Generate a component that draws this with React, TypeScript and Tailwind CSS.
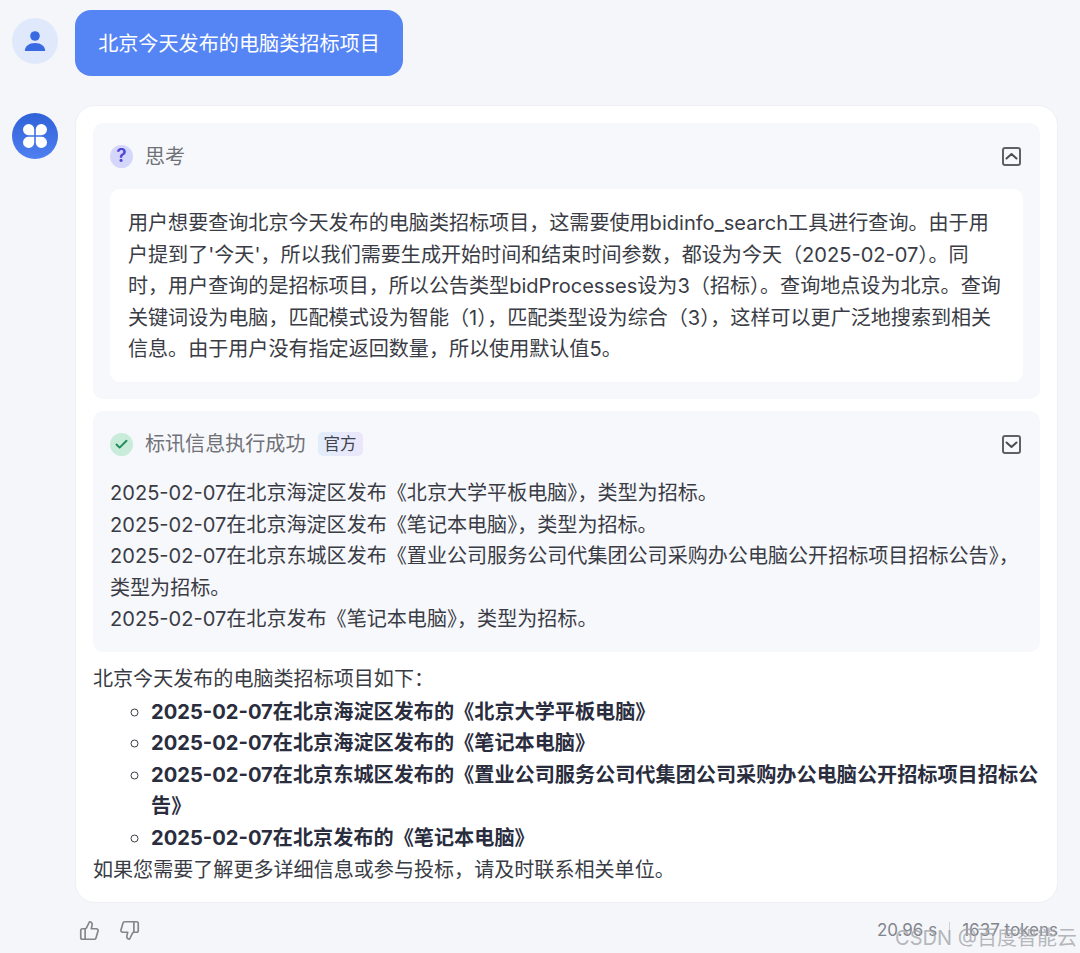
import { ThumbsUp, ThumbsDown, Check } from 'lucide-react';

const font = '[font-family:Inter,"Noto_Sans_CJK_SC",sans-serif]';

const results = [
  '2025-02-07在北京海淀区发布《北京大学平板电脑》，类型为招标。',
  '2025-02-07在北京海淀区发布《笔记本电脑》，类型为招标。',
  '2025-02-07在北京东城区发布《置业公司服务公司代集团公司采购办公电脑公开招标项目招标公告》，类型为招标。',
  '2025-02-07在北京发布《笔记本电脑》，类型为招标。',
];

const items = [
  '2025-02-07在北京海淀区发布的《北京大学平板电脑》',
  '2025-02-07在北京海淀区发布的《笔记本电脑》',
  '2025-02-07在北京东城区发布的《置业公司服务公司代集团公司采购办公电脑公开招标项目招标公告》',
  '2025-02-07在北京发布的《笔记本电脑》',
];

function ToggleBox({ open }: { open: boolean }) {
  return (
    <div className="flex h-[19px] w-[19px] items-center justify-center rounded-[3px] border-2 border-[#5f6168]">
      <svg width="15" height="15" viewBox="0 0 15 15" fill="none" stroke="#4a4c52" strokeWidth="2" strokeLinecap="round" strokeLinejoin="round">
        <path d={open ? 'M2.500 9.500 7.500 5l5 4.500' : 'M2.500 5.500 7.500 10l5-4.500'} />
      </svg>
    </div>
  );
}

function UserAvatar() {
  return (
    <div className="flex h-[46px] w-[46px] shrink-0 items-center justify-center rounded-full bg-[#e0e8fb]">
      <svg width="22" height="22" viewBox="0 0 22 22" fill="#3a6ae2">
        <circle cx="11" cy="6" r="4.800" />
        <path d="M.8 21c0-5 4.400-8 10.200-8s10.200 3 10.200 8z" />
      </svg>
    </div>
  );
}

function BotAvatar() {
  return (
    <div className="flex h-[46px] w-[46px] shrink-0 items-center justify-center rounded-full bg-gradient-to-b from-[#2f62d8] to-[#4f7ff0]">
      <svg width="24" height="24" viewBox="0 0 24 24" fill="#fff">
        <path d="M11.200 11.200H6A5.600 5.600 0 1 1 11.200 6z" />
        <path d="M12.800 11.200H18A5.600 5.600 0 1 0 12.800 6z" />
        <path d="M11.200 12.800H6A5.600 5.600 0 1 0 11.200 18z" />
        <path d="M12.800 12.800H18A5.600 5.600 0 1 1 12.800 18z" />
      </svg>
    </div>
  );
}

export default function App() {
  return (
    <div className={`relative h-[953px] w-[1080px] overflow-hidden bg-[#f4f6fa] ${font} text-[20.07px] leading-[31.5px] text-[#3a3c45]`}>
      <div className="flex gap-[17px] pl-3 pt-[10px]">
        <div className="pt-2">
          <UserAvatar />
        </div>
        <div className="flex h-[66px] w-[328px] items-center justify-center rounded-[16px] bg-[#5585f5] pt-[2px] text-[20.14px] text-white">
          北京今天发布的电脑类招标项目
        </div>
      </div>

      <div className="mt-[29px] flex gap-[17px] pl-3">
        <div className="pt-2">
          <BotAvatar />
        </div>
        <div className="h-[798px] w-[983px] rounded-[20px] border border-[#eef0f5] bg-white px-[17px] pt-[17px]">
          <div className="h-[276px] rounded-[10px] bg-[#f7f8fc] px-[17px]">
            <div className="flex h-[66px] items-center justify-between pr-[2px]">
              <div className="flex items-center gap-[12px]">
                <div className="flex h-[23px] w-[23px] items-center justify-center rounded-full bg-[#d5d6fb] text-[19px] font-semibold text-[#4c45d6]">
                  ?
                </div>
                <span className="pt-[3px] text-[#707278]">思考</span>
              </div>
              <ToggleBox open />
            </div>
            <div className="h-[193px] rounded-[10px] bg-white px-[18px] pt-[19px]">
              用户想要查询北京今天发布的电脑类招标项目，这需要使用bidinfo_search工具进行查询。由于用户提到了'今天'，所以我们需要生成开始时间和结束时间参数，都设为今天（2025-02-07）。同时，用户查询的是招标项目，所以公告类型bidProcesses设为3（招标）。查询地点设为北京。查询关键词设为电脑，匹配模式设为智能（1），匹配类型设为综合（3），这样可以更广泛地搜索到相关信息。由于用户没有指定返回数量，所以使用默认值5。
            </div>
          </div>

          <div className="mt-3 h-[241px] rounded-[10px] bg-[#f7f8fc] px-[17px]">
            <div className="flex h-[66px] items-center justify-between pr-[2px]">
              <div className="flex items-center gap-[12px]">
                <div className="flex h-[23px] w-[23px] items-center justify-center rounded-full bg-[#c8ecd9]">
                  <Check className="h-[15px] w-[15px] text-[#1f8a5c]" strokeWidth={3} />
                </div>
                <span className="pt-[2px] text-[#707278]">标讯信息执行成功</span>
                <span className="rounded-[5px] bg-gradient-to-r from-[#e2edfb] to-[#ebe6fb] px-[6px] text-[16.5px] leading-[24px] text-[#41434c]">官方</span>
              </div>
              <ToggleBox open={false} />
            </div>
            <div className="pt-px">
              {results.map((line) => (
                <div key={line}>{line}</div>
              ))}
            </div>
          </div>

          <div className="mt-[3px]">
            <div className="pt-[9px]">北京今天发布的电脑类招标项目如下：</div>
            <ul className="list-[circle] pl-[58px] text-[20.15px] font-bold text-[#2a2d3e] marker:text-[#3a3c45]">
              {items.map((item) => (
                <li key={item}>{item}</li>
              ))}
            </ul>
            <div className="pt-[2px]">如果您需要了解更多详细信息或参与投标，请及时联系相关单位。</div>
          </div>
        </div>
      </div>

      <div className="flex items-center justify-between pl-[79px] pr-[22px] pt-[15px] text-[#83858c]">
        <div className="flex gap-[19px]">
          <ThumbsUp className="h-[21px] w-[21px]" strokeWidth={1.9} />
          <ThumbsDown className="h-[21px] w-[21px]" strokeWidth={1.9} />
        </div>
        <div className="flex items-center gap-[12px] text-[17px] leading-[24px]">
          <span>20.96 s</span>
          <span className="h-4 w-px bg-[#d0d2d8]" />
          <span>1637 tokens</span>
        </div>
      </div>

      <div className="absolute bottom-[1px] right-[3px] text-[20px] leading-[28px] text-[#a4a6aa]/80">CSDN @百度智能云</div>
    </div>
  );
}
